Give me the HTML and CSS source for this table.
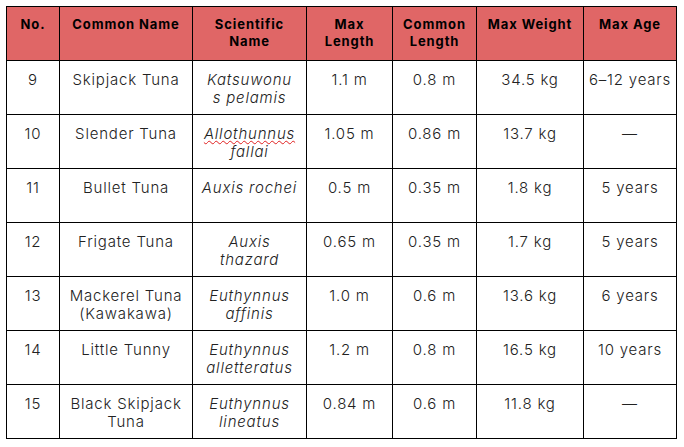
FILE: index.html
```html
<!DOCTYPE html>
<html>
<head>
<meta charset="utf-8">
<link rel="stylesheet" href="styles.css">
</head>
<body>
<table class="fish">
  <colgroup>
    <col class="c1"><col class="c2"><col class="c3"><col class="c4"><col class="c5"><col class="c6"><col class="c7">
  </colgroup>
  <thead>
    <tr>
      <th>No.</th>
      <th>Common Name</th>
      <th>Scientific<br>Name</th>
      <th>Max<br>Length</th>
      <th>Common<br>Length</th>
      <th>Max Weight</th>
      <th>Max Age</th>
    </tr>
  </thead>
  <tbody>
    <tr>
      <td>9</td><td>Skipjack Tuna</td><td class="sci">Katsuwonu<br>s pelamis</td><td>1.1 m</td><td>0.8 m</td><td>34.5 kg</td><td>6–12 years</td>
    </tr>
    <tr>
      <td>10</td><td>Slender Tuna</td><td class="sci"><span class="spell">Allothunnus</span><br>fallai</td><td>1.05 m</td><td>0.86 m</td><td>13.7 kg</td><td>—</td>
    </tr>
    <tr>
      <td>11</td><td>Bullet Tuna</td><td class="sci">Auxis rochei</td><td>0.5 m</td><td>0.35 m</td><td>1.8 kg</td><td>5 years</td>
    </tr>
    <tr>
      <td>12</td><td>Frigate Tuna</td><td class="sci">Auxis<br>thazard</td><td>0.65 m</td><td>0.35 m</td><td>1.7 kg</td><td>5 years</td>
    </tr>
    <tr>
      <td>13</td><td>Mackerel Tuna<br>(Kawakawa)</td><td class="sci">Euthynnus<br>affinis</td><td>1.0 m</td><td>0.6 m</td><td>13.6 kg</td><td>6 years</td>
    </tr>
    <tr>
      <td>14</td><td>Little Tunny</td><td class="sci">Euthynnus<br>alletteratus</td><td>1.2 m</td><td>0.8 m</td><td>16.5 kg</td><td>10 years</td>
    </tr>
    <tr>
      <td>15</td><td>Black Skipjack<br>Tuna</td><td class="sci">Euthynnus<br>lineatus</td><td>0.84 m</td><td>0.6 m</td><td>11.8 kg</td><td>—</td>
    </tr>
  </tbody>
</table>
</body>
</html>
```
FILE: styles.css
```css
html, body {
  margin: 0;
  padding: 0;
  background: #ffffff;
}
body {
  padding: 6px 0 0 6px;
  font-family: "Inter", "Liberation Sans", sans-serif;
}
.fish {
  border-collapse: collapse;
  table-layout: fixed;
  width: 671px;
}
.c1 { width: 53px; }
.c2 { width: 133px; }
.c3 { width: 114px; }
.c4 { width: 86px; }
.c5 { width: 84px; }
.c6 { width: 107px; }
.c7 { width: 93px; }
.fish th, .fish td {
  border: 1px solid #000;
  text-align: center;
  vertical-align: top;
  padding: 9px 2px 0;
  height: 54px;
  box-sizing: border-box;
}
.fish th {
  background: #e06666;
  color: #000;
  font-weight: 700;
  font-size: 13px;
  line-height: 17px;
  letter-spacing: 0.9px;
}
.fish td {
  padding-top: 10px;
  color: #222;
  font-size: 15px;
  line-height: 18px;
  font-weight: 300;
  letter-spacing: 0.8px;
}
.fish td.sci {
  font-style: italic;
}
.spell {
  text-decoration: underline wavy #e02020;
  text-decoration-thickness: 1px;
  text-underline-offset: 1px;
}
```
